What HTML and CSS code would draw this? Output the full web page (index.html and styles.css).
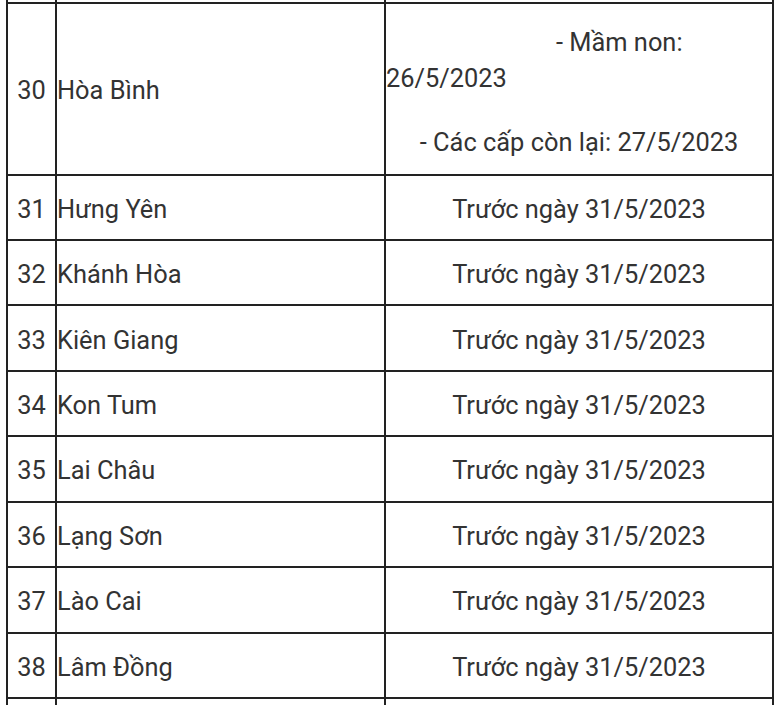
FILE: index.html
```html
<!DOCTYPE html>
<html lang="vi">
<head>
<meta charset="utf-8">
<title>Lịch</title>
<link rel="stylesheet" href="styles.css">
</head>
<body>
<table class="sched">
  <colgroup>
    <col class="c-num">
    <col class="c-name">
    <col class="c-date">
  </colgroup>
  <tr class="spacer"><td></td><td></td><td></td></tr>
  <tr class="tall">
    <td class="num">30</td>
    <td class="name">Hòa Bình</td>
    <td class="date multi">
      <p class="p1">- Mầm non:<br>26/5/2023</p>
      <p class="p2">- Các cấp còn lại: 27/5/2023</p>
    </td>
  </tr>
  <tr class="row"><td class="num">31</td><td class="name">Hưng Yên</td><td class="date">Trước ngày 31/5/2023</td></tr>
  <tr class="row"><td class="num">32</td><td class="name">Khánh Hòa</td><td class="date">Trước ngày 31/5/2023</td></tr>
  <tr class="row"><td class="num">33</td><td class="name">Kiên Giang</td><td class="date">Trước ngày 31/5/2023</td></tr>
  <tr class="row"><td class="num">34</td><td class="name">Kon Tum</td><td class="date">Trước ngày 31/5/2023</td></tr>
  <tr class="row"><td class="num">35</td><td class="name">Lai Châu</td><td class="date">Trước ngày 31/5/2023</td></tr>
  <tr class="row"><td class="num">36</td><td class="name">Lạng Sơn</td><td class="date">Trước ngày 31/5/2023</td></tr>
  <tr class="row"><td class="num">37</td><td class="name">Lào Cai</td><td class="date">Trước ngày 31/5/2023</td></tr>
  <tr class="row"><td class="num">38</td><td class="name">Lâm Đồng</td><td class="date">Trước ngày 31/5/2023</td></tr>
  <tr class="row"><td></td><td></td><td></td></tr>
</table>
</body>
</html>
```
FILE: styles.css
```css
html, body {
  margin: 0;
  padding: 0;
  overflow: hidden;
  background: #fff;
}
body {
  font-family: Roboto, "Liberation Sans", Arial, sans-serif;
  font-size: 25.4px;
  color: #333;
}
.sched {
  border-collapse: collapse;
  margin-left: 6px;
  width: 766px;
  table-layout: fixed;
}
.c-num { width: 49px; }
.c-name { width: 329px; }
.c-date { width: 388px; }
.sched td {
  border: 2px solid #222;
  padding: 3px 1px 0 1px;
  line-height: 36px;
  vertical-align: middle;
}
.sched .name { padding-left: 0; }
.spacer td {
  border-top: none;
  height: 2px;
  padding: 0 !important;
  line-height: 0;
}
.tall td { height: 162.5px; }
.row td { height: 60.45px; }
.num { text-align: center; }
.name { text-align: left; }
.date { text-align: center; }
.sched .multi { padding: 7px 0 0 0; }
.multi p { margin: 0; }
.p1 {
  text-align: left;
  text-indent: 170px;
}
.p2 {
  margin-top: 28px !important;
  text-align: center;
}
```
